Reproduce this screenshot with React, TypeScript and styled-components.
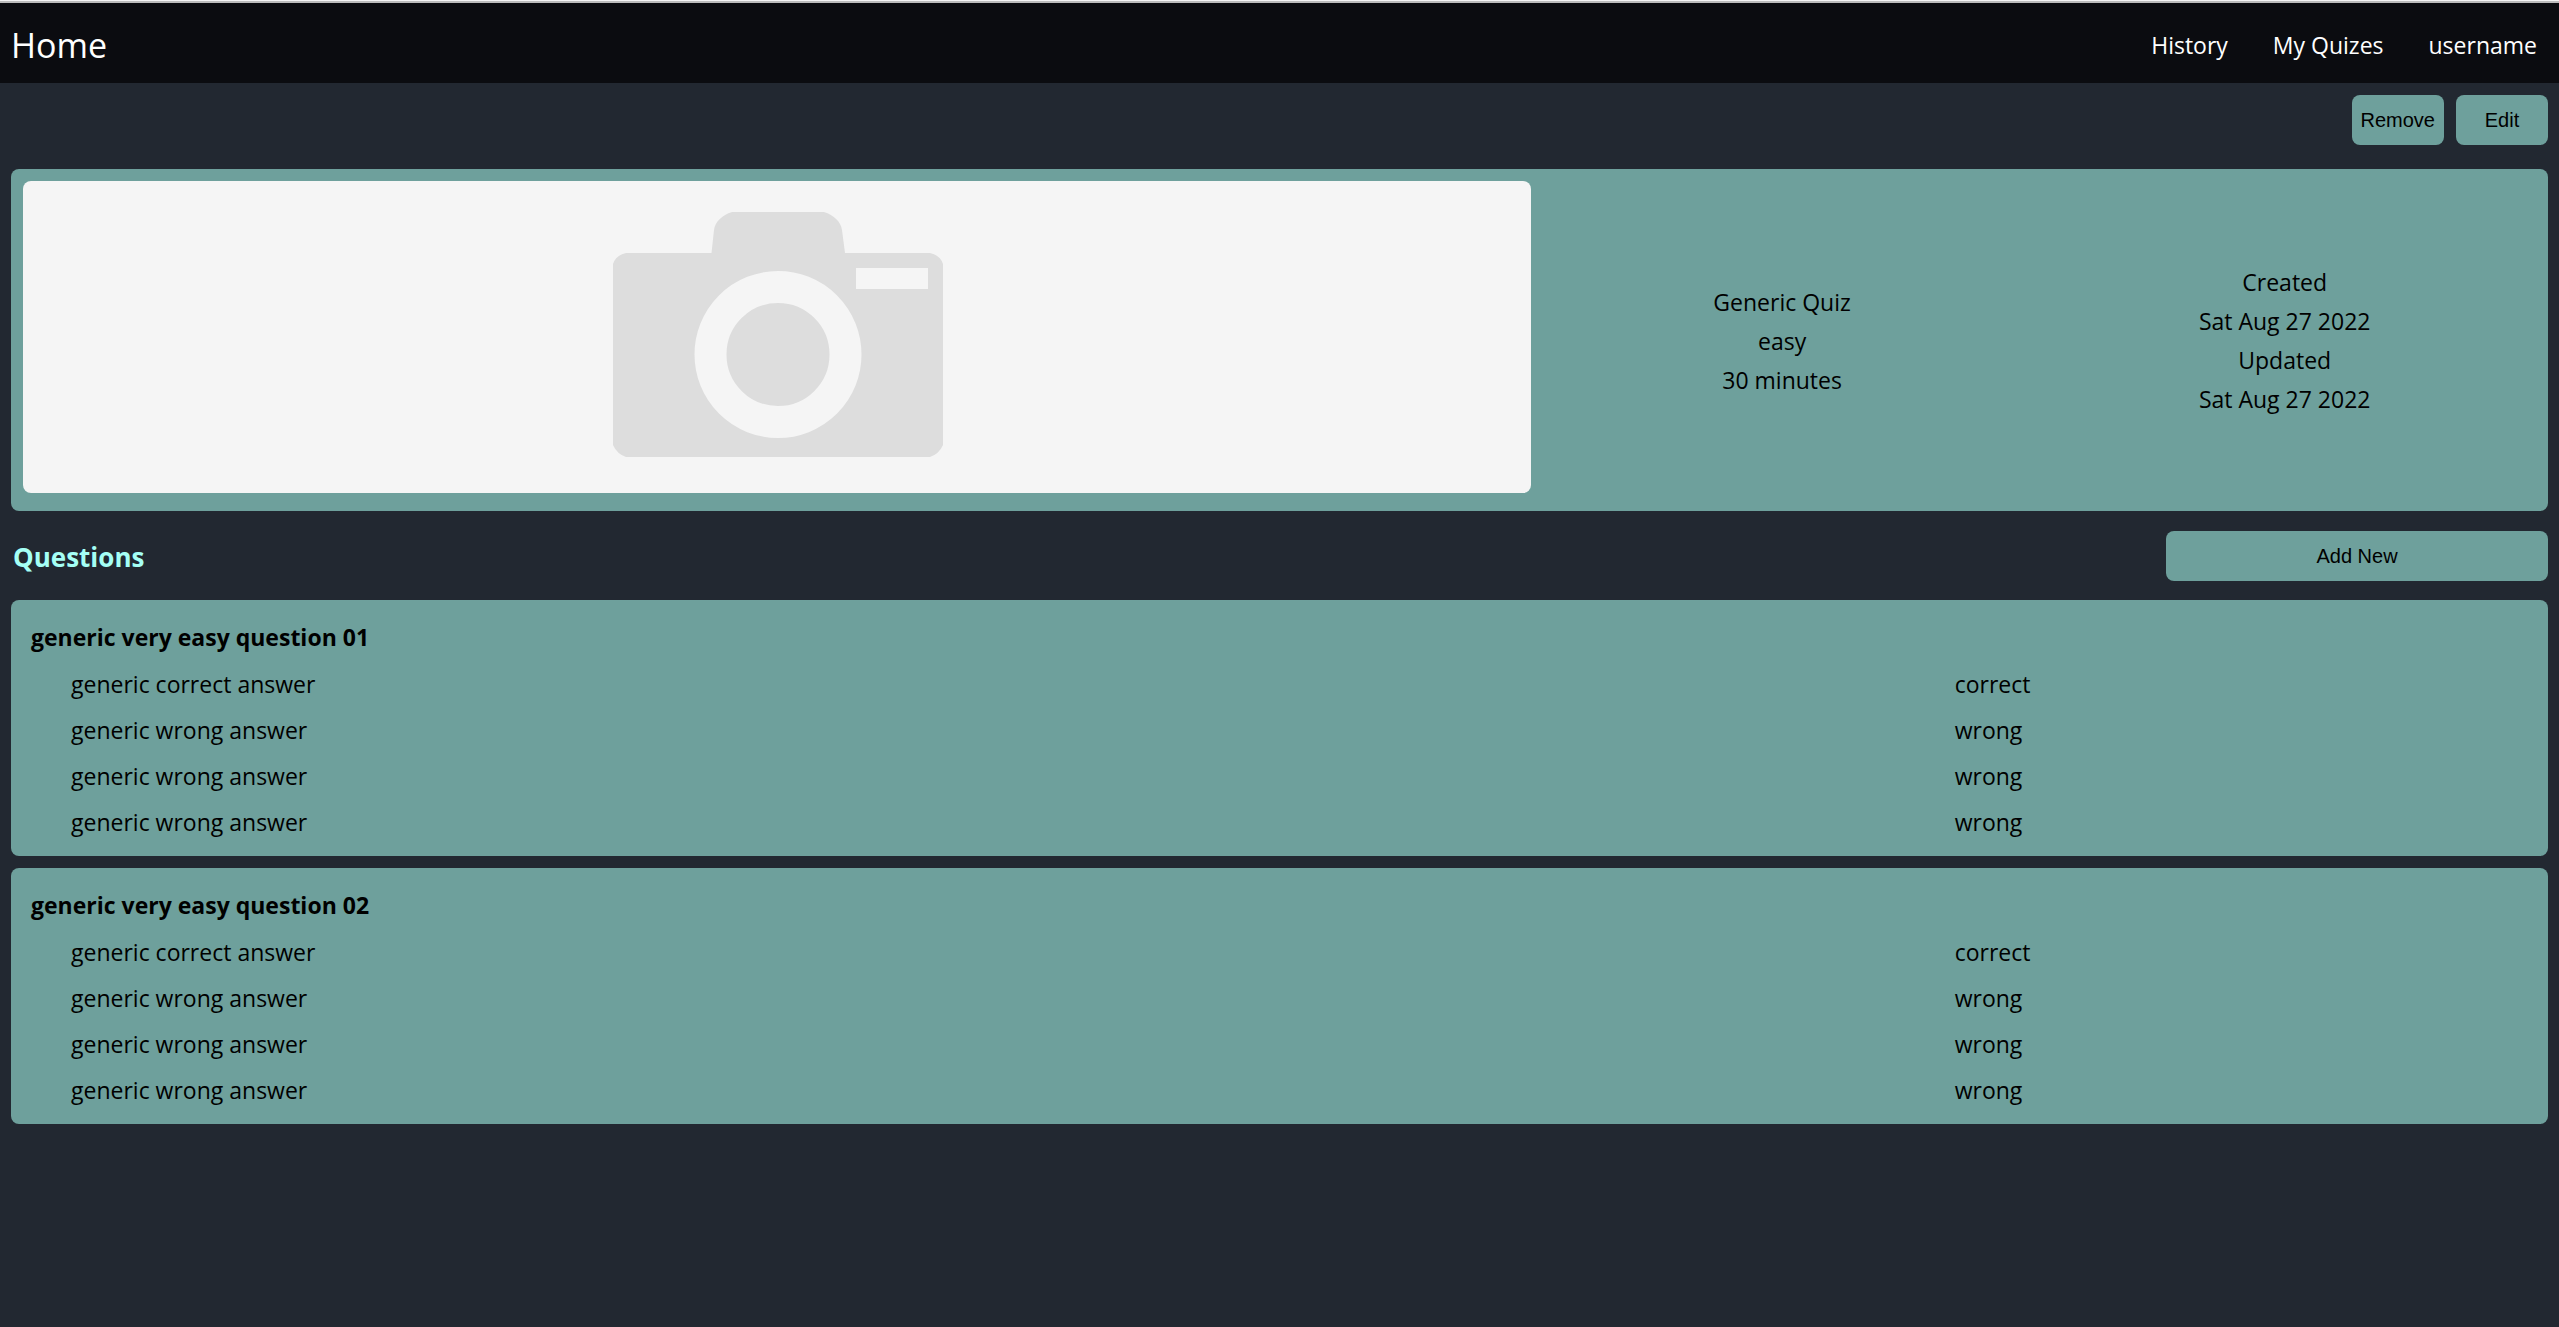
import React from "react";
import styled, { createGlobalStyle } from "styled-components";

const teal = "#6ea09c";

const GlobalStyle = createGlobalStyle`
  *, *::before, *::after { box-sizing: border-box; }
  body {
    margin: 0;
    background: #222831;
    color: #000;
    font-family: "Segoe UI", "Open Sans", "Noto Sans", sans-serif;
    font-size: 23px;
  }
  h2, h3, p, ul, figure { margin: 0; padding: 0; }
`;

const Page = styled.div`
  border-top: 1px solid #f4f4f4;
`;

const Header = styled.header`
  display: flex;
  align-items: center;
  justify-content: space-between;
  height: 82px;
  padding: 3px 22px 0 11px;
  background: #0b0c10;
  border-top: 2px solid #bcbcbc;
`;

const NavLink = styled.a<{ $brand?: boolean }>`
  color: #fff;
  font-size: ${(p) => (p.$brand ? 34 : 23)}px;
  line-height: 48px;
  text-decoration: none;
`;

const Nav = styled.nav`
  display: flex;
  gap: 45px;
`;

const Main = styled.main`
  padding: 12px 11px;
`;

const Toolbar = styled.div`
  display: flex;
  justify-content: flex-end;
  gap: 12px;
  margin-bottom: 24px;
`;

const Button = styled.button<{ $wide?: boolean }>`
  width: ${(p) => (p.$wide ? "382px" : "auto")};
  min-width: 92px;
  height: 50px;
  padding: 0 9px;
  border: 0;
  border-radius: 8px;
  background: ${teal};
  color: #000;
  font-family: Arial, "Liberation Sans", sans-serif;
  font-size: 20px;
  cursor: pointer;
`;

const Card = styled.section`
  border-radius: 8px;
  background: ${teal};
`;

const Summary = styled(Card)`
  display: grid;
  grid-template-columns: 3fr 1fr 1fr;
  align-items: center;
  padding: 12px 12px 18px;
`;

const Picture = styled.figure`
  display: flex;
  justify-content: center;
  border-radius: 8px;
  background: #f5f5f5;
`;

const Facts = styled.div`
  padding-top: 8px;
  line-height: 39px;
  text-align: center;
`;

const SectionBar = styled.div`
  display: flex;
  align-items: center;
  justify-content: space-between;
  padding: 20px 0 19px;
`;

const SectionTitle = styled.h2`
  padding: 2px 0 0 2px;
  color: #a5fff5;
  font-size: 26px;
  line-height: 40px;
`;

const QuestionList = styled.div`
  display: grid;
  gap: 12px;
`;

const Question = styled(Card)`
  padding: 13px 20px 11px;
`;

const QuestionTitle = styled.h3`
  font-size: 23px;
  line-height: 48px;
`;

const Answers = styled.ul`
  padding-left: 40px;
  list-style: none;
`;

const Answer = styled.li`
  display: grid;
  grid-template-columns: 23fr 7fr;
  line-height: 46px;
`;

const CameraPicture = () => (
  <svg width="416" height="312" viewBox="0 0 416 312" role="img" aria-label="No picture">
    <path
      fill="#ddd"
      d="M57 72H142.500L145 49C146 41 153 34 163 31H255C265 34 272 41 273 49L276 72H361Q371 74 374 83V264Q370 273 361 276H57Q48 273 44 264V83Q47 74 57 72Z"
    />
    <rect x="287" y="87" width="72" height="21" fill="#f5f5f5" />
    <circle cx="209" cy="173.500" r="67.500" fill="none" stroke="#f5f5f5" strokeWidth="32" />
  </svg>
);

const facts = [
  ["Generic Quiz", "easy", "30 minutes"],
  ["Created", "Sat Aug 27 2022", "Updated", "Sat Aug 27 2022"],
];

const answers = [
  { text: "generic correct answer", correct: true },
  { text: "generic wrong answer", correct: false },
  { text: "generic wrong answer", correct: false },
  { text: "generic wrong answer", correct: false },
];

const questions = [
  { title: "generic very easy question 01", answers },
  { title: "generic very easy question 02", answers },
];

export default function App() {
  return (
    <Page>
      <GlobalStyle />
      <Header>
        <NavLink href="#home" $brand>Home</NavLink>
        <Nav>
          <NavLink href="#history">History</NavLink>
          <NavLink href="#quizes">My Quizes</NavLink>
          <NavLink href="#user">username</NavLink>
        </Nav>
      </Header>
      <Main>
        <Toolbar>
          <Button type="button">Remove</Button>
          <Button type="button">Edit</Button>
        </Toolbar>
        <Summary>
          <Picture>
            <CameraPicture />
          </Picture>
          {facts.map((lines, i) => (
            <Facts key={i}>
              {lines.map((line, j) => (
                <p key={j}>{line}</p>
              ))}
            </Facts>
          ))}
        </Summary>
        <SectionBar>
          <SectionTitle>Questions</SectionTitle>
          <Button type="button" $wide>Add New</Button>
        </SectionBar>
        <QuestionList>
          {questions.map((q) => (
            <Question key={q.title}>
              <QuestionTitle>{q.title}</QuestionTitle>
              <Answers>
                {q.answers.map((a, i) => (
                  <Answer key={i}>
                    <span>{a.text}</span>
                    <span>{a.correct ? "correct" : "wrong"}</span>
                  </Answer>
                ))}
              </Answers>
            </Question>
          ))}
        </QuestionList>
      </Main>
    </Page>
  );
}
